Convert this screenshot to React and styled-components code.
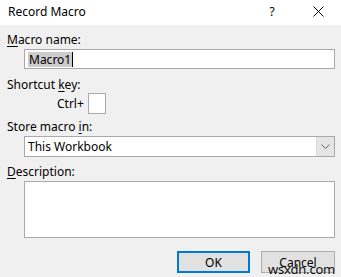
import React from 'react';
import styled, { createGlobalStyle } from 'styled-components';

const Global = createGlobalStyle`
  html, body { margin: 0; padding: 0; background: #f0f0f0; }
  body { font-family: "Noto Sans", "Open Sans", sans-serif; font-size: 12px; color: #000; }
`;

const Dialog = styled.div`
  width: 341px;
  height: 277px;
  background: #f0f0f0;
  position: relative;
  overflow: hidden;
`;

const TitleBar = styled.div`
  height: 25px;
  background: #fff;
  display: flex;
  align-items: center;
  padding-left: 8px;
`;

const Title = styled.span`
  flex: 1;
  font-size: 12px;
  line-height: 16px;
  margin-top: -2px;
`;

const TitleButton = styled.span`
  width: 46px;
  display: flex;
  justify-content: center;
  align-items: center;
  font-size: 12px;
  line-height: 16px;
  margin-top: -2px;
  color: #000;
`;

const Content = styled.div`
  padding: 0 6px 0 7px;
  display: flex;
  flex-direction: column;
`;

const Label = styled.div`
  line-height: 16px;
  margin-top: ${(p) => p.top}px;
  u { text-decoration: underline; text-underline-offset: 2px; }
`;

const Field = styled.div`
  margin-left: 17px;
  margin-top: ${(p) => p.top || 0}px;
  height: ${(p) => p.h}px;
  background: #fff;
  border: 1px solid #a9a9a9;
  box-sizing: border-box;
  display: flex;
  align-items: center;
`;

const Selected = styled.span`
  margin-left: 3px;
  padding: 0 1px;
  background: #cccccc;
  line-height: 15px;
  border-right: 1px solid #000;
`;

const ShortcutRow = styled.div`
  display: flex;
  align-items: center;
  height: 21px;
  padding-left: 50px;
  gap: 4px;
`;

const KeyBox = styled.div`
  width: 18px;
  height: 21px;
  background: #fff;
  border: 1px solid #a9a9a9;
  box-sizing: border-box;
`;

const SelectText = styled.span`
  flex: 1;
  padding-left: 3px;
`;

const Arrow = styled.div`
  width: 17px;
  height: 100%;
  background: #e5e5e5;
  border-left: 1px solid #dadada;
  display: flex;
  align-items: center;
  justify-content: center;
`;

const Footer = styled.div`
  display: flex;
  justify-content: flex-end;
  gap: 11px;
  margin-top: 13px;
`;

const Button = styled.div`
  width: ${(p) => (p.primary ? 73 : 74)}px;
  height: 22px;
  box-sizing: border-box;
  background: #e1e1e1;
  border: ${(p) => (p.primary ? '2px solid #0078d7' : '1px solid #adadad')};
  display: flex;
  align-items: center;
  justify-content: center;
`;

const Watermark = styled.span`
  position: absolute;
  left: 268px;
  top: 261px;
  font-size: 13px;
  line-height: 16px;
  color: #111;
  letter-spacing: -0.2px;
`;

export default function App() {
  return (
    <Dialog>
      <Global />
      <TitleBar>
        <Title>Record Macro</Title>
        <TitleButton>?</TitleButton>
        <TitleButton>
          <svg width="11" height="11" viewBox="0 0 11 11">
            <path d="M0.5 0.5 L10.5 10.5 M10.5 0.5 L0.5 10.5" stroke="#000" strokeWidth="1" fill="none" />
          </svg>
        </TitleButton>
      </TitleBar>
      <Content>
        <Label top={7}><u>M</u>acro name:</Label>
        <Field h={20} top={1}>
          <Selected>Macro1</Selected>
        </Field>
        <Label top={8}>Shortcut <u>k</u>ey:</Label>
        <ShortcutRow>
          <span>Ctrl+</span>
          <KeyBox />
        </ShortcutRow>
        <Label top={5}>Store macro <u>i</u>n:</Label>
        <Field h={21} top={1}>
          <SelectText>This Workbook</SelectText>
          <Arrow>
            <svg width="9" height="5" viewBox="0 0 9 5">
              <path d="M0.5 0.5 L4.5 4.5 L8.5 0.5" stroke="#606060" strokeWidth="1" fill="none" />
            </svg>
          </Arrow>
        </Field>
        <Label top={7}><u>D</u>escription:</Label>
        <Field h={57} top={1} />
        <Footer>
          <Button primary>OK</Button>
          <Button>Cancel</Button>
        </Footer>
      </Content>
      <Watermark>wsxdn.com</Watermark>
    </Dialog>
  );
}
